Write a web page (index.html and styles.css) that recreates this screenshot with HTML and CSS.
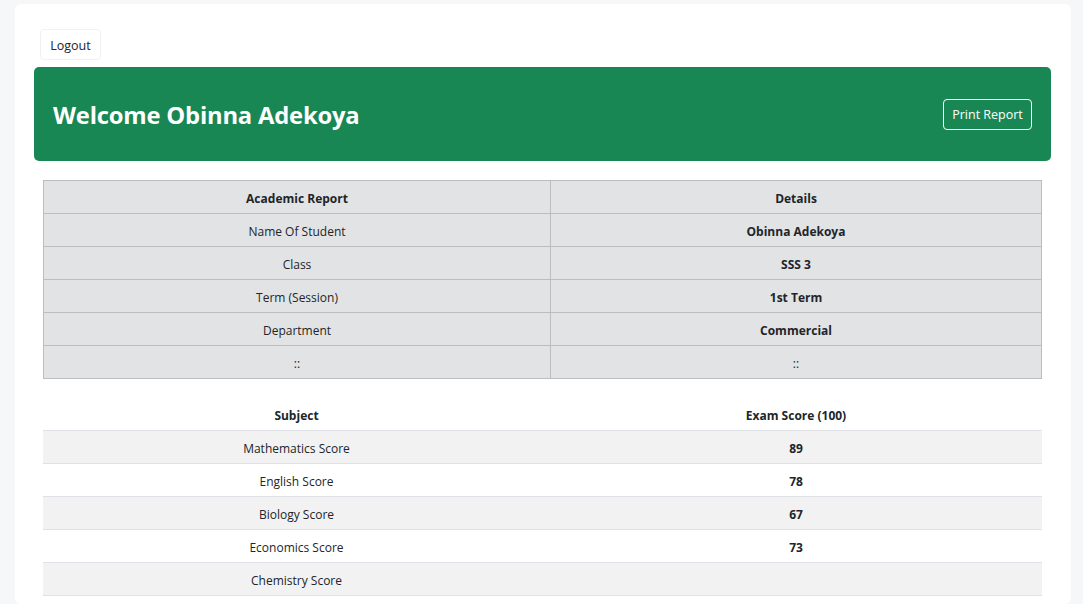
FILE: index.html
```html
<!DOCTYPE html>
<html lang="en">
<head>
<meta charset="utf-8">
<title>Academic Report</title>
<link rel="stylesheet" href="styles.css">
</head>
<body>
<div class="page">
  <div class="toolbar"><button class="btn-logout">Logout</button></div>
  <div class="banner">
    <h1>Welcome Obinna Adekoya</h1>
    <button class="btn-print">Print Report</button>
  </div>
  <div class="tables">
    <table class="info">
      <tr><th>Academic Report</th><th>Details</th></tr>
      <tr><td>Name Of Student</td><td class="b">Obinna Adekoya</td></tr>
      <tr><td>Class</td><td class="b">SSS 3</td></tr>
      <tr><td>Term (Session)</td><td class="b">1st Term</td></tr>
      <tr><td>Department</td><td class="b">Commercial</td></tr>
      <tr><td>::</td><td>::</td></tr>
    </table>
    <table class="scores">
      <tr><th>Subject</th><th>Exam Score (100)</th></tr>
      <tr><td>Mathematics Score</td><td class="b">89</td></tr>
      <tr><td>English Score</td><td class="b">78</td></tr>
      <tr><td>Biology Score</td><td class="b">67</td></tr>
      <tr><td>Economics Score</td><td class="b">73</td></tr>
      <tr><td>Chemistry Score</td><td class="b"></td></tr>
    </table>
  </div>
</div>
</body>
</html>
```
FILE: styles.css
```css
* { box-sizing: border-box; }
html, body { margin: 0; padding: 0; }
body {
  background: #f6f7f9;
  font-family: "Open Sans", "Noto Sans", sans-serif;
  color: #212529;
  height: 604px;
  overflow: hidden;
}
.page {
  margin: 4px 12px 0 15px;
  background: #fff;
  border-radius: 6px;
  padding: 25px 20px 0 19px;
  height: 600px;
  overflow: hidden;
}
.toolbar { display: flex; padding-left: 6px; }
.btn-logout {
  font-family: inherit;
  font-size: 12.5px;
  color: #212529;
  background: #fff;
  border: 1px solid #f1f1f3;
  border-radius: 4px;
  height: 31px;
  width: 61px;
  padding: 1px 0 0 0;
}
.banner {
  margin-top: 7px;
  background: #198754;
  border-radius: 5px;
  height: 94px;
  display: flex;
  align-items: center;
  justify-content: space-between;
  padding: 0 19px 0 19px;
}
.banner h1 {
  margin: 2px 0 0 0;
  color: #fff;
  font-size: 23.8px;
  font-weight: 700;
  letter-spacing: -0.2px;
}
.btn-print {
  font-family: inherit;
  font-size: 12.5px;
  color: #fff;
  background: transparent;
  border: 1px solid #fff;
  border-radius: 4px;
  height: 31px;
  width: 89px;
  padding: 0;
  margin-top: 1px;
}
.tables { padding: 19px 9px 0 9px; }
table {
  width: 100%;
  border-collapse: collapse;
  font-size: 12px;
  table-layout: fixed;
}
table th:first-child, table td:first-child { width: 507px; }
th, td {
  height: 33px;
  text-align: center;
  vertical-align: middle;
  padding: 4px 0 0 0;
}
th, td.b { font-weight: 700; }
.info { background: #e2e3e5; }
.info th, .info td { border: 1px solid #bcbdbf; padding-top: 3px; }
.scores { margin-top: 19px; }
.scores th { height: 32px; border-bottom: 1px solid #dee2e6; padding-top: 3px; }
.scores td { border-bottom: 1px solid #dee2e6; }
.scores tr:nth-child(even) td { background: #f2f2f2; }
```
